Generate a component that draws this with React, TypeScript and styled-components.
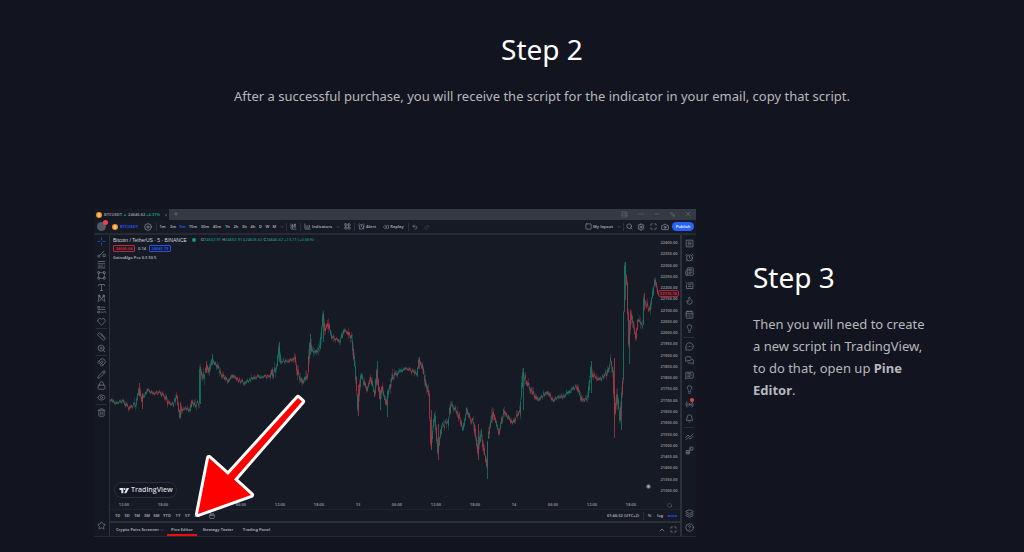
import React from 'react';
import styled, { createGlobalStyle } from 'styled-components';
import {
  AlarmClock, Bell, Calendar, CalendarDays, Camera, ChartArea, ChartCandlestick, ChevronDown,
  ChevronUp, CirclePlus, CircleQuestionMark, Eye, Flame, Heart, Hexagon, Layers, LayoutGrid,
  Lightbulb, Lock, Magnet, Maximize, MessageCircleMore, MessageSquareText, MessagesSquare, Minus,
  MoreHorizontal, Newspaper, Pencil, Plus, Radio, Redo2, Rewind, Ruler, Search, Settings, Square,
  SquareStack, Star, TableProperties, Trash2, Type, Undo2, VectorSquare, X, ZoomIn,
} from 'lucide-react';

const Global = createGlobalStyle`
  * { box-sizing: border-box; }
  body { margin: 0; background: #12141f; font-family: "Noto Sans", "Open Sans", sans-serif; color: #b8b9bc; }
  button { font: inherit; color: inherit; background: none; border: 0; padding: 0; margin: 0; cursor: pointer; }
`;

const Page = styled.main`
  padding: 28px 0 16px;
`;
const Intro = styled.section`
  padding: 0 34px 0 94px;
  text-align: center;
`;
const Heading = styled.h2`
  margin: 0;
  font-size: 28px;
  line-height: 42px;
  font-weight: 400;
  color: #fff;
`;
const Copy = styled.p`
  margin: 15px 0 0;
  font-size: 13px;
  line-height: 22px;
`;
const Feature = styled.section`
  display: grid;
  grid-template-columns: minmax(0, 1fr) 180px;
  column-gap: 57px;
  align-items: center;
  margin-top: 102px;
  padding: 0 91px 0 94px;
`;
const FeatureText = styled.div`
  padding-bottom: 90px;
`;

const Window = styled.div`
  position: relative;
  background: #161a25;
  color: #9a9ea8;
  font-family: "Open Sans", "Noto Sans", sans-serif;
  font-size: 4px;
  font-weight: 700;
  line-height: 6px;
  white-space: nowrap;
  border-bottom: 1px solid #262a36;
  svg { display: block; flex: none; }
`;
const TitleBar = styled.div`
  display: flex;
  height: 11px;
  background: #343944;
  color: #777c87;
`;
const BrowserTab = styled.div`
  display: flex;
  align-items: center;
  gap: 2px;
  width: 75px;
  padding: 0 3px 0 2px;
  background: #151924;
  color: #868b96;
`;
const Up = styled.span`
  color: #12917f;
`;
const Toolbar = styled.div`
  display: flex;
  align-items: center;
  height: 15px;
  border-bottom: 2px solid #262a36;
`;
const Tool = styled.button<{ $w: number; $active?: boolean }>`
  display: flex;
  align-items: center;
  justify-content: center;
  gap: 1px;
  flex: none;
  width: ${(p) => p.$w}px;
  height: 10px;
  color: ${(p) => (p.$active ? '#2753ea' : 'inherit')};
`;
const Ticker = styled(Tool)`
  justify-content: flex-start;
  gap: 2px;
`;
const Divider = styled.span`
  flex: none;
  width: 1px;
  height: 8px;
  background: #2b303c;
`;
const Spacer = styled.span`
  flex: 1;
`;
const Avatar = styled.span`
  position: relative;
  flex: none;
  width: 9px;
  height: 9px;
  margin: 0 6px 0 3px;
  border-radius: 50%;
  background: #535963;
`;
const Badge = styled.i`
  position: absolute;
  right: -2px;
  top: -2px;
  width: 5px;
  height: 5px;
  border-radius: 50%;
  background: #ef4052;
`;
const RailBadge = styled(Badge)`
  right: 0;
  top: 1px;
  width: 4px;
  height: 4px;
`;
const Publish = styled.button`
  width: 22px;
  height: 9px;
  margin: 0 2px 0 1px;
  border-radius: 5px;
  background: #2962ff;
  color: #dbe4ff;
`;
const Workspace = styled.div`
  display: grid;
  grid-template-columns: 16px minmax(0, 1fr) 16px;
`;
const Rail = styled.nav<{ $side: 'left' | 'right' }>`
  display: flex;
  flex-direction: column;
  background: #141823;
  color: #737884;
  ${(p) => (p.$side === 'left' ? 'border-right: 1px solid #2b303b;' : 'border-left: 2px solid #2b303b;')}
`;
const RailGroup = styled.div<{ $h: number; $last?: boolean }>`
  display: flex;
  flex-direction: column;
  height: ${(p) => p.$h}px;
  margin: 1px 2px 0;
  padding-bottom: 1px;
  border-bottom: ${(p) => (p.$last ? 0 : 1)}px solid #292e39;
`;
const RailButton = styled.button<{ $active?: boolean }>`
  position: relative;
  display: flex;
  flex: 1;
  align-items: center;
  justify-content: center;
  color: ${(p) => (p.$active ? '#2753ea' : 'inherit')};
`;
const Main = styled.div`
  display: flex;
  flex-direction: column;
  min-width: 0;
`;
const Plot = styled.div`
  position: relative;
  display: grid;
  grid-template-columns: minmax(0, 1fr) 22px;
`;
const Chart = styled.svg`
  width: 100%;
  height: auto;
`;
const Prices = styled.ol`
  display: flex;
  flex-direction: column;
  justify-content: space-between;
  margin: 0;
  padding: 5px 2px 3px;
  list-style: none;
  text-align: center;
  color: #7e828d;
`;
const PriceTag = styled.span`
  position: absolute;
  right: 1px;
  top: 55px;
  padding: 0 1px;
  border: 1px solid #a52736;
  border-radius: 2px;
  background: #321823;
  color: #c23143;
  line-height: 5px;
`;
const Legend = styled.div`
  position: absolute;
  left: 3px;
  top: 0;
`;
const LegendRow = styled.div`
  display: flex;
  align-items: center;
  gap: 3px;
  height: 9px;
`;
const Title = styled.strong`
  font-family: "Liberation Sans", sans-serif;
  font-size: 5px;
  font-weight: 400;
  color: #d0d2d8;
`;
const Dot = styled.i`
  width: 4px;
  height: 4px;
  margin: 0 2px;
  border-radius: 50%;
  background: #0f9a83;
`;
const Ohlc = styled.span`
  font-weight: 600;
`;
const Quote = styled.span<{ $color: string }>`
  width: 22px;
  border: 1px solid ${(p) => p.$color};
  border-radius: 1px;
  color: ${(p) => p.$color};
  text-align: center;
  line-height: 5px;
`;
const Brand = styled.div`
  position: absolute;
  left: 4px;
  bottom: -1px;
  display: flex;
  align-items: center;
  gap: 1px;
  height: 16px;
  padding: 0 3px 0 4px;
  border: 1px solid #2a2e39;
  border-radius: 8px;
  background: #131722;
  color: #d5d7dc;
  font-size: 7px;
  font-weight: 600;
`;
const Flash = styled.i`
  position: absolute;
  right: 29px;
  bottom: 8px;
  width: 5px;
  height: 5px;
  border: 1px solid #454a56;
  border-radius: 50%;
  background: #9da1aa;
`;
const Times = styled.div`
  display: flex;
  align-items: center;
  height: 13px;
  padding: 4px 8px 0 6px;
  border-bottom: 1px solid #1d222d;
  color: #7e828d;
`;
const TimeLabels = styled.div`
  display: flex;
  flex: 1;
  justify-content: space-between;
  margin-right: 28px;
  span { width: 16px; text-align: center; }
`;
const Strip = styled.div<{ $h: number }>`
  display: flex;
  align-items: center;
  height: ${(p) => p.$h}px;
  padding-left: 3px;
`;
const BottomTabs = styled(Strip)`
  border-top: 2px solid #2b303b;
`;
const PanelTab = styled(Tool)`
  height: 100%;
  padding-top: 2px;
  border-bottom: 2px solid ${(p) => (p.$active ? '#f00c0c' : 'transparent')};
  color: #9ea2ab;
`;
const Arrow = styled.svg`
  position: absolute;
  left: 0;
  top: 0;
  width: 100%;
  height: auto;
  pointer-events: none;
`;

/* Turning points of the price line, in chart units. */
const points: [number, number][] = [
  [110, 400], [115, 403], [123, 401], [129, 408], [136, 404], [139, 389], [142, 401], [143, 397], [148, 390], [154, 393],
  [160, 392], [166, 398], [168, 403], [173, 405], [177, 396], [180, 416], [182, 408], [190, 410], [192, 400], [195, 406],
  [199, 403], [200, 370], [203, 379], [207, 366], [209, 372], [212, 359], [217, 366], [223, 376], [228, 381], [233, 375],
  [239, 380], [245, 383], [255, 377], [264, 376], [270, 377], [272, 370], [273, 376], [277, 365], [279, 347], [281, 361],
  [288, 361], [295, 358], [298, 372], [303, 383], [308, 373], [310, 343], [312, 353], [320, 347], [323, 316], [325, 330],
  [328, 324], [332, 338], [340, 341], [344, 330], [348, 333], [352, 340], [355, 367], [358, 406], [361, 374], [367, 390],
  [371, 379], [375, 395], [377, 369], [380, 399], [382, 388], [387, 406], [388, 393], [393, 377], [399, 371], [405, 368],
  [411, 370], [417, 375], [419, 360], [422, 366], [426, 385], [429, 397], [431, 443], [435, 415], [438, 452], [442, 425],
  [448, 423], [451, 404], [458, 413], [463, 429], [467, 409], [470, 418], [474, 423], [478, 452], [481, 432], [484, 449],
  [487, 465], [488, 440], [493, 411], [499, 433], [504, 411], [512, 423], [520, 412], [523, 373], [528, 385], [537, 400],
  [547, 392], [553, 400], [565, 395], [577, 386], [582, 401], [588, 398], [591, 370], [593, 375], [600, 380], [607, 373],
  [611, 361], [613, 369], [615, 412], [617, 393], [620, 418], [623, 380], [624, 313], [625, 268], [627, 284], [629, 345],
  [631, 312], [636, 337], [638, 321], [643, 325], [644, 300], [650, 310], [655, 281], [658, 292],
];
/* Long wicks: x, high, low. */
const spikes: [number, number, number, boolean][] = [
  [139, 383, 396, false], [142, 393, 409, false], [180, 402, 418, false], [200, 367, 404, true], [206, 361, 373, false],
  [212, 354, 365, true], [279, 342, 362, true], [310, 334, 355, true], [323, 313, 342, true], [358, 385, 416, false],
  [377, 361, 385, true], [380, 390, 410, true], [387, 392, 417, true], [419, 357, 369, true], [431, 410, 450, false],
  [438, 424, 460, false], [478, 424, 460, false], [487, 442, 479, true], [523, 368, 410, true], [591, 361, 393, true],
  [614, 358, 438, false], [621, 400, 430, true], [625, 262, 300, true], [629, 320, 364, true], [644, 293, 310, false],
];

const yAt = (x: number) => {
  const i = Math.max(1, points.findIndex((p) => p[0] >= x));
  const [x0, y0] = points[i - 1];
  const [x1, y1] = points[i];
  return y0 + ((y1 - y0) * (x - x0)) / (x1 - x0);
};
const noise = (n: number) => {
  const v = Math.sin(n * 127.1) * 43758.5;
  return v - Math.floor(v);
};
const candles = Array.from({ length: 548 }, (_, i) => {
  const x = 110 + i;
  const swing = Math.abs(yAt(Math.min(658, x + 5)) - yAt(Math.max(110, x - 5)));
  const shift = (noise(i + 300) - 0.5) * Math.min(6, 2 + swing * 0.15);
  const a = yAt(x) + shift;
  const b = yAt(Math.min(658, x + 1)) + shift;
  const wick = 1 + noise(i) * Math.min(6, 1 + swing * 0.2);
  const tail = 1 + noise(i + 900) * Math.min(6, 1 + swing * 0.2);
  const drop = b > a;
  return { x, a, b, hi: Math.min(a, b) - wick, lo: Math.max(a, b) + tail, up: noise(i + 50) > 0.35 ? !drop : drop };
});
const GREEN = '#1a7566';
const RED = '#a83a47';

const PriceChart = () => (
  <Chart viewBox="110 235 548 262" role="img" aria-label="Bitcoin price chart">
    {candles.map((c) => (
      <g key={c.x} stroke={c.up ? GREEN : RED}>
        <path d={`M${c.x + 0.5} ${c.hi}V${c.lo}`} strokeWidth="0.8" opacity="0.5" />
        <path d={`M${c.x + 0.5} ${Math.min(c.a, c.b) - 0.5}V${Math.max(c.a, c.b) + 0.8}`} strokeWidth="1" opacity="0.85" />
      </g>
    ))}
    {spikes.map(([x, hi, lo, up]) => (
      <path key={x} d={`M${x + 0.5} ${hi}V${lo}`} stroke={up ? GREEN : RED} strokeWidth="1" opacity="0.8" />
    ))}
  </Chart>
);

const Coin = () => (
  <svg width="6" height="6" viewBox="0 0 12 12" aria-hidden="true">
    <circle cx="6" cy="6" r="6" fill="#ee9020" />
    <path d="M4.5 3v6M4.5 3h2q1.500 0 1.500 1.500T6.500 6h-2M6.500 6q2 0 2 1.500T6.500 9h-2" stroke="#fff2df" fill="none" />
  </svg>
);
const BrandMark = () => (
  <svg width="11" height="7" viewBox="0 0 36 24" fill="#e3e5e9" aria-hidden="true">
    <path d="M1 3h13v18H7V10H1zM24 21h-7l8-18h9z" />
    <circle cx="18" cy="6.500" r="3.500" />
  </svg>
);

type Icon = React.ComponentType<{ size?: number; strokeWidth?: number }>;
const lineIcon = (d: string): Icon => ({ size = 9 }) => (
  <svg width={size} height={size} viewBox="0 0 24 24" fill="none" stroke="currentColor" strokeWidth="2" aria-hidden="true">
    <path d={d} />
  </svg>
);
const Cross = lineIcon('M12 1v8M12 15v8M1 12h8M15 12h8');
const TrendLine = lineIcon('M7 17L19 5M2 19a3 3 0 1 0 6 0a3 3 0 1 0-6 0M16 14h6v6h-6z');
const Fib = lineIcon('M2 4h20M2 10h20M2 16h14M2 21h20M19 16h3');
const Pattern = lineIcon('M3 21L6 4l6 9 6-9 3 17M6 19l6-6 6 6M4 3h4v4H4zM16 3h4v4h-4z');
const Forecast = lineIcon('M2 4h5v4H2zM10 6h12M2 12h20M2 17h5v4H2zM10 19h8M20 17h2v4');
const Watchlist = lineIcon('M3 3h18v18H3zM7 8h10M7 12h10M7 16h10');
const DataWindow = lineIcon('M2 3l5 4M8 5h13v15H4V9M8 10h9M8 15h9');
const ZigZag = lineIcon('M1 15l7-7 5 5 9-8M2 21l7-7 5 5 8-8');
const Blocks = lineIcon('M13 3h8v8h-8zM13 8h4M3 12h9v9H3zM3 17h9M8 12v9');

const intervals: [string, number][] = [
  ['1m', 11], ['3m', 10], ['5m', 9], ['15m', 12], ['30m', 12], ['45m', 12], ['1h', 9], ['2h', 8], ['3h', 9],
  ['4h', 8], ['D', 7], ['W', 7], ['M', 7],
];
const ranges: [string, number][] = [
  ['1D', 9], ['5D', 10], ['1M', 10], ['3M', 10], ['6M', 9], ['YTD', 12], ['1Y', 10], ['5Y', 9], ['All', 10],
];
const times = ['12:00', '18:00', '12', '06:00', '12:00', '18:00', '13', '06:00', '12:00', '18:00', '14', '06:00', '12:00', '18:00'];
const prices = Array.from({ length: 23 }, (_, i) => (22400 - i * 50).toFixed(2));

const railIcons = (icons: [string, Icon][], active?: string) =>
  icons.map(([name, I]) => (
    <RailButton key={name} aria-label={name} $active={name === active}>
      <I size={9} strokeWidth={2} />
      {name === 'Streams' && <RailBadge />}
    </RailButton>
  ));

const TradingWindow = () => (
  <Window>
    <TitleBar>
      <BrowserTab>
        <Coin />
        <span>BTCUSDT <Up>▲</Up> 24646.62 <Up>+4.31%</Up></span>
        <Spacer />
        <X size={4} />
      </BrowserTab>
      <Tool $w={14} aria-label="New tab"><Plus size={6} /></Tool>
      <Spacer />
      <Tool $w={16} aria-label="Layouts"><TableProperties size={7} opacity={0.6} /></Tool>
      <Tool $w={18} aria-label="More"><MoreHorizontal size={8} opacity={0.6} /></Tool>
      <Tool $w={14} aria-label="Minimize"><Minus size={6} /></Tool>
      <Tool $w={16} aria-label="Restore"><SquareStack size={5} /></Tool>
      <Tool $w={16} aria-label="Close"><X size={6} /></Tool>
    </TitleBar>
    <Toolbar>
      <Avatar><Badge /></Avatar>
      <Ticker $w={30} $active><Coin />BTCUSDT</Ticker>
      <Tool $w={11} aria-label="Compare"><CirclePlus size={8} /></Tool>
      <Tool $w={3} aria-hidden="true" />
      <Divider />
      {intervals.map(([name, w]) => <Tool key={name} $w={w} $active={name === '5m'}>{name}</Tool>)}
      <Tool $w={8} aria-label="More intervals"><ChevronDown size={4} /></Tool>
      <Divider />
      <Tool $w={13} aria-label="Candles"><ChartCandlestick size={7} /></Tool>
      <Divider />
      <Tool $w={34}><ChartArea size={7} />Indicators</Tool>
      <Tool $w={6} aria-label="Favorites"><ChevronDown size={4} /></Tool>
      <Tool $w={13} aria-label="Templates"><LayoutGrid size={7} /></Tool>
      <Divider />
      <Tool $w={24}><AlarmClock size={7} />Alert</Tool>
      <Tool $w={29}><Rewind size={6} />Replay</Tool>
      <Divider />
      <Tool $w={12} aria-label="Undo"><Undo2 size={6} /></Tool>
      <Tool $w={12} aria-label="Redo"><Redo2 size={6} opacity={0.4} /></Tool>
      <Spacer />
      <Tool $w={30}><Square size={7} />My layout</Tool>
      <Tool $w={9} aria-label="Manage layouts"><ChevronDown size={4} /></Tool>
      <Divider />
      <Tool $w={11} aria-label="Search"><Search size={7} /></Tool>
      <Tool $w={12} aria-label="Settings"><Settings size={8} /></Tool>
      <Tool $w={12} aria-label="Fullscreen"><Maximize size={7} /></Tool>
      <Tool $w={12} aria-label="Snapshot"><Camera size={8} /></Tool>
      <Publish>Publish</Publish>
    </Toolbar>
    <Workspace>
      <Rail $side="left" aria-label="Drawing tools">
        <RailGroup $h={93}>
          {railIcons([['Cross', Cross], ['Trend line', TrendLine], ['Fibonacci', Fib], ['Shapes', VectorSquare], ['Text', Type], ['Patterns', Pattern], ['Forecast', Forecast], ['Favorites', Heart]], 'Cross')}
        </RailGroup>
        <RailGroup $h={26}>{railIcons([['Measure', Ruler], ['Zoom', ZoomIn]])}</RailGroup>
        <RailGroup $h={48}>
          {railIcons([['Magnet', Magnet], ['Keep drawing', Pencil], ['Lock', Lock], ['Hide', Eye]])}
        </RailGroup>
        <RailGroup $h={14} $last>{railIcons([['Remove', Trash2]])}</RailGroup>
        <Spacer />
        <RailGroup $h={21} $last>{railIcons([['Star', Star]])}</RailGroup>
      </Rail>
      <Main>
        <Plot>
          <PriceChart />
          <Prices>{prices.map((p) => <li key={p}>{p}</li>)}</Prices>
          <PriceTag>22176.16</PriceTag>
          <Legend>
            <LegendRow>
              <Title>Bitcoin / TetherUS · 5 · BINANCE</Title>
              <Dot />
              <Ohlc>
                O<Up>24632.91</Up> H<Up>24652.91</Up> L<Up>24626.62</Up> C<Up>24646.62 +13.71 (+0.06%)</Up>
              </Ohlc>
            </LegendRow>
            <LegendRow>
              <Quote $color="#c22a3b">24645.64</Quote>
              <span>0.14</span>
              <Quote $color="#2753ea">24645.78</Quote>
            </LegendRow>
            <LegendRow>GainzAlgo Pro 0.5 50 5</LegendRow>
          </Legend>
          <Brand><BrandMark />TradingView</Brand>
          <Flash />
        </Plot>
        <Times>
          <TimeLabels>{times.map((t, i) => <span key={i}>{t}</span>)}</TimeLabels>
          <Hexagon size={5} />
        </Times>
        <Strip $h={11}>
          {ranges.map(([name, w]) => <Tool key={name} $w={w}>{name}</Tool>)}
          <Tool $w={20} aria-label="Go to date"><Calendar size={6} /></Tool>
          <Spacer />
          <Tool $w={40}>01:46:32 (UTC+2)</Tool>
          <Divider />
          <Tool $w={11}>%</Tool>
          <Tool $w={10}>log</Tool>
          <Tool $w={15} $active>auto</Tool>
        </Strip>
        <BottomTabs $h={15}>
          <PanelTab $w={54}>Crypto Pairs Screener <ChevronDown size={4} /></PanelTab>
          <PanelTab $w={30} $active>Pine Editor</PanelTab>
          <PanelTab $w={42}>Strategy Tester</PanelTab>
          <PanelTab $w={35}>Trading Panel</PanelTab>
          <Spacer />
          <Tool $w={10} aria-label="Expand"><ChevronUp size={8} /></Tool>
          <Tool $w={13} aria-label="Maximize panel"><Maximize size={7} /></Tool>
        </BottomTabs>
      </Main>
      <Rail $side="right" aria-label="Widgets">
        <RailGroup $h={102}>
          {railIcons([['Watchlist', Watchlist], ['Alerts', AlarmClock], ['News', Newspaper], ['Data', DataWindow], ['Hotlists', Flame], ['Calendar', CalendarDays], ['Ideas', Lightbulb]])}
        </RailGroup>
        <RailGroup $h={89}>
          {railIcons([['Chat', MessageCircleMore], ['Messages', MessagesSquare], ['Comments', MessageSquareText], ['Idea stream', Lightbulb], ['Streams', Radio], ['Notifications', Bell]])}
        </RailGroup>
        <RailGroup $h={30} $last>{railIcons([['Order panel', ZigZag], ['Depth', Blocks]])}</RailGroup>
        <Spacer />
        <RailGroup $h={30} $last>{railIcons([['Object tree', Layers], ['Help', CircleQuestionMark]])}</RailGroup>
      </Rail>
    </Workspace>
    <Arrow viewBox="94 209 602 327" aria-hidden="true">
      <path
        d="M198 514L209 458L228 475L298 398L302 401.500L234 479.500L251 495Z"
        fill="#fe0000" stroke="#fff" strokeWidth="6" strokeLinejoin="round" paintOrder="stroke"
      />
    </Arrow>
  </Window>
);

export default function App() {
  return (
    <>
      <Global />
      <Page>
        <Intro>
          <Heading>Step 2</Heading>
          <Copy>After a successful purchase, you will receive the script for the indicator in your email, copy that script.</Copy>
        </Intro>
        <Feature>
          <TradingWindow />
          <FeatureText>
            <Heading>Step 3</Heading>
            <Copy>
              Then you will need to create a new script in TradingView, to do that, open up <strong>Pine Editor</strong>.
            </Copy>
          </FeatureText>
        </Feature>
      </Page>
    </>
  );
}
